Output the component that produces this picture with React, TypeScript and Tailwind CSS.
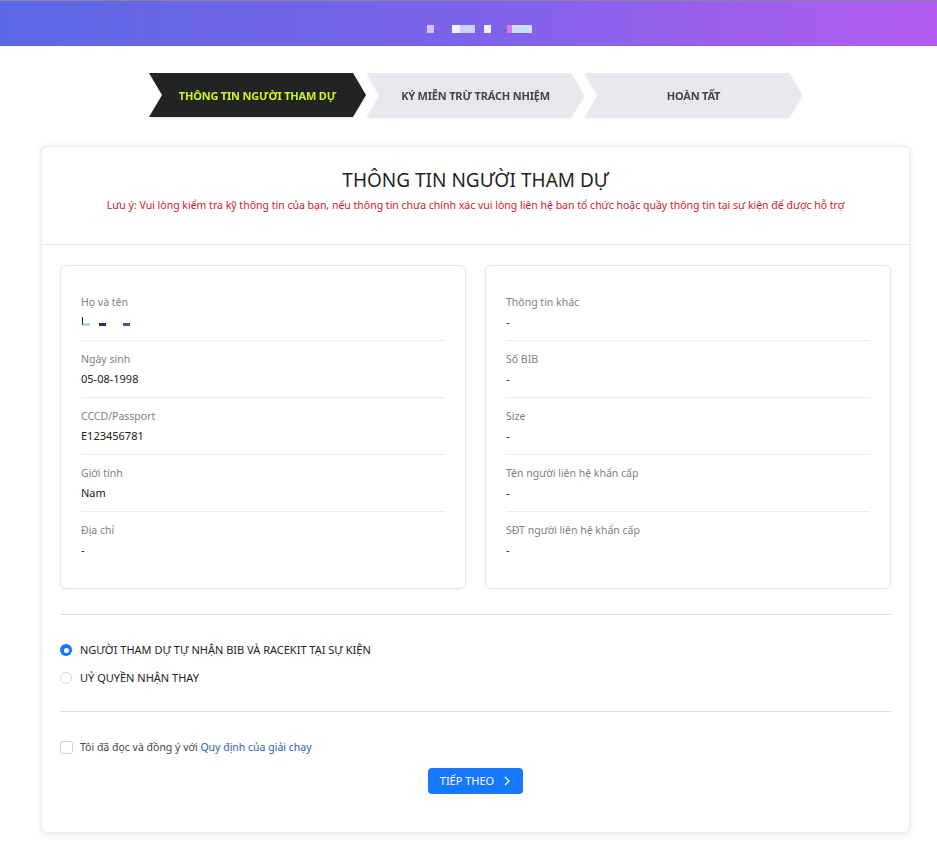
import React from "react";

const font = { fontFamily: '"Noto Sans", "Open Sans", sans-serif' };

type Field = { label: string; value?: string; redacted?: boolean };

const leftFields: Field[] = [
  { label: "Họ và tên", redacted: true },
  { label: "Ngày sinh", value: "05-08-1998" },
  { label: "CCCD/Passport", value: "E123456781" },
  { label: "Giới tính", value: "Nam" },
  { label: "Địa chỉ", value: "-" },
];

const rightFields: Field[] = [
  { label: "Thông tin khác", value: "-" },
  { label: "Số BIB", value: "-" },
  { label: "Size", value: "-" },
  { label: "Tên người liên hệ khẩn cấp", value: "-" },
  { label: "SĐT người liên hệ khẩn cấp", value: "-" },
];

function RedactedName() {
  return (
    <div className="flex h-4 items-center">
      <div className="relative h-4 w-[60px]">
        <span className="absolute left-[1px] top-[3px] h-[8px] w-[1px] bg-[#333]" />
        <span className="absolute left-[2px] top-[9px] h-[3px] w-[7px] bg-[#a8e0ec]" />
        <span className="absolute left-[18px] top-[9px] h-[3px] w-[7px] bg-[#3b2280]" />
        <span className="absolute left-[42px] top-[9px] h-[3px] w-[7px] bg-[#5b4b8f]" />
      </div>
    </div>
  );
}

function InfoCard({ fields }: { fields: Field[] }) {
  return (
    <div className="rounded-md border border-[#e8e8e8] bg-white px-5 pt-[18px] pb-[20px] shadow-[0_1px_3px_rgba(0,0,0,0.06)]">
      {fields.map((f, i) => (
        <div
          key={f.label}
          className={`pt-[10px] pb-[10px] ${i < fields.length - 1 ? "border-b border-[#ececec]" : ""}`}
        >
          <div className="text-[10.5px] leading-4 text-[#808080]">{f.label}</div>
          <div className="mt-1 text-[11px] leading-4 text-[#222]">
            {f.redacted ? <RedactedName /> : f.value}
          </div>
        </div>
      ))}
    </div>
  );
}

function Step({ label, active }: { label: string; active?: boolean }) {
  return (
    <div
      className={`flex h-[44px] w-[217px] items-center justify-center pt-[3px] [clip-path:polygon(0_0,94%_0,100%_50%,94%_100%,0_100%,6%_50%)] ${
        active ? "bg-[#232323] text-[#c8f524]" : "bg-[#e7e8ec] text-[#444]"
      }`}
    >
      <span className="text-[11px] font-bold tracking-[-0.2px]">{label}</span>
    </div>
  );
}

export default function App() {
  return (
    <div className="min-h-[861px] bg-white" style={font}>
      {/* top bar */}
      <div className="flex h-[46px] items-center justify-center border-t border-[#8a7fb0] bg-gradient-to-r from-[#5b69e4] via-[#7c63ea] to-[#b25bee]">
        <div className="ml-[21px] mt-[10px] flex items-center">
          <span className="h-[8px] w-[7px] bg-[#d6c2f2]" />
          <span className="ml-[18px] h-[8px] w-[8px] bg-[#f4f0ff]" />
          <span className="h-[8px] w-[15px] bg-[#c9d2f8]" />
          <span className="ml-[9px] h-[8px] w-[7px] bg-[#eef0ff]" />
          <span className="ml-[16px] h-[8px] w-[5px] bg-[#d67be6]" />
          <span className="h-[8px] w-[20px] bg-[#c9dcf8]" />
        </div>
      </div>

      <div className="ml-[41px] w-[869px]">
        {/* steps */}
        <div className="mt-[27px] flex justify-center gap-[1px] drop-shadow-[0_1px_1px_rgba(0,0,0,0.12)]">
          <Step label="THÔNG TIN NGƯỜI THAM DỰ" active />
          <Step label="KÝ MIỄN TRỪ TRÁCH NHIỆM" />
          <Step label="HOÀN TẤT" />
        </div>

        {/* main card */}
        <div className="mt-[29px] rounded-md border border-[#ececec] bg-white shadow-[0_1px_6px_rgba(0,0,0,0.10)]">
          <div className="border-b border-[#e6e6e6] pt-[19px] pb-[31px] text-center">
            <h1 className="text-[19px] leading-7 text-[#1f1f1f]">THÔNG TIN NGƯỜI THAM DỰ</h1>
            <p className="mt-[3px] text-[10.5px] leading-4 text-[#d0202a]">
              Lưu ý: Vui lòng kiểm tra kỹ thông tin của bạn, nếu thông tin chưa chính xác vui lòng liên hệ ban tổ chức hoặc quầy thông tin tại sự kiện để được hỗ trợ
            </p>
          </div>

          <div className="px-[18px] pt-5 pb-[38px]">
            <div className="grid grid-cols-2 gap-[19px]">
              <InfoCard fields={leftFields} />
              <InfoCard fields={rightFields} />
            </div>

            <div className="mt-[25px] border-t border-[#dcdcdc]" />

            <div className="flex flex-col gap-[12px] pt-[27px] pb-[25px]">
              <label className="flex items-center gap-[8px] text-[11px] leading-4 text-[#222]">
                <span className="flex h-[12px] w-[12px] items-center justify-center rounded-full bg-[#1677ff]">
                  <span className="h-[5px] w-[5px] rounded-full bg-white" />
                </span>
                NGƯỜI THAM DỰ TỰ NHẬN BIB VÀ RACEKIT TẠI SỰ KIỆN
              </label>
              <label className="flex items-center gap-[8px] text-[11px] leading-4 text-[#222]">
                <span className="h-[12px] w-[12px] rounded-full border border-[#d9d9d9] bg-white" />
                UỶ QUYỀN NHẬN THAY
              </label>
            </div>

            <div className="border-t border-[#dcdcdc]" />

            <label className="mt-[27px] flex items-center gap-[7px] text-[10.5px] leading-4 text-[#444]">
              <span className="h-[13px] w-[13px] rounded-[3px] border border-[#d0d0d0] bg-white" />
              <span>
                Tôi đã đọc và đồng ý với <span className="text-[#2a62b0]">Quy định của giải chạy</span>
              </span>
            </label>

            <div className="mt-[13px] flex justify-center">
              <button className="flex h-[26px] w-[95px] items-center justify-center gap-[9px] rounded-[4px] bg-[#1677ff] text-[11px] text-white">
                TIẾP THEO
                <svg width="8" height="10" viewBox="0 0 8 10" fill="none">
                  <path d="M2 1l4 4-4 4" stroke="white" strokeWidth="1.3" />
                </svg>
              </button>
            </div>
          </div>
        </div>
      </div>
    </div>
  );
}
